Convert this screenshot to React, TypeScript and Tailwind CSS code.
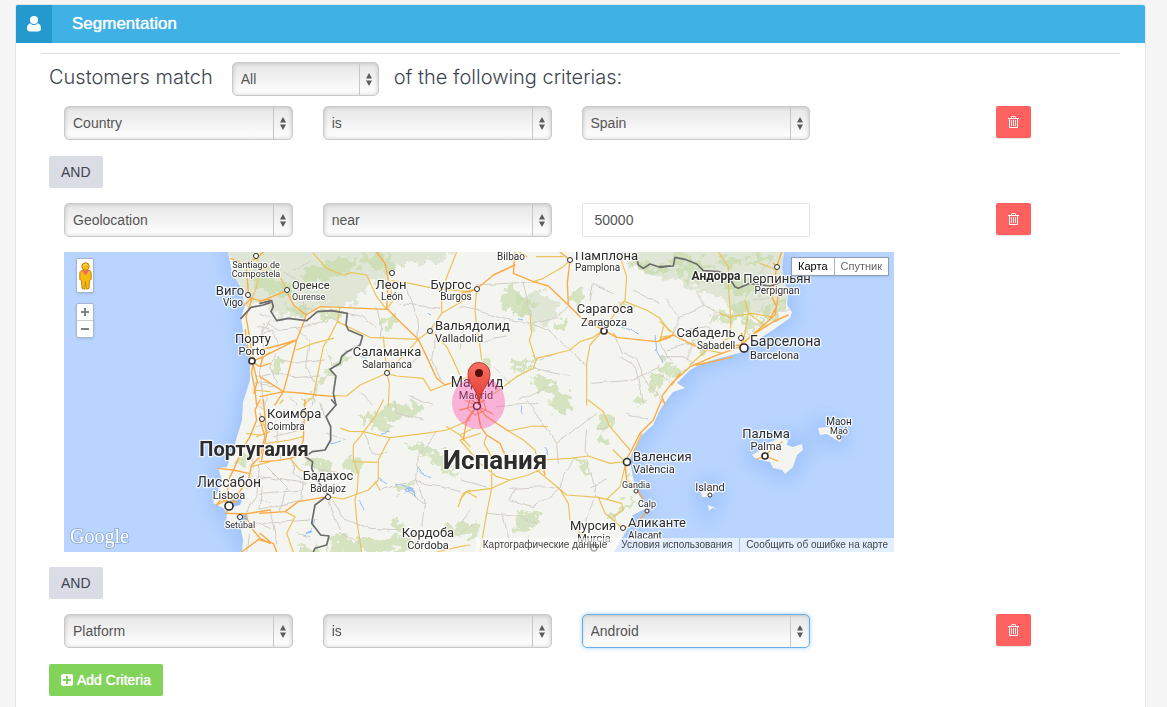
import React, { useState } from "react";

/* ---------- Icons ---------- */

function UserIcon() {
  return (
    <svg width="14" height="16" viewBox="0 0 14 16" fill="currentColor" aria-hidden="true">
      <circle cx="7" cy="4" r="4" />
      <path d="M3.2 7.2C1.2 7.8 0 9.6 0 12.6 0 14.3 1 15.4 2.6 15.4h8.8c1.600 0 2.600-1.100 2.600-2.800 0-3-1.200-4.800-3.200-5.400C9.800 8.300 8.500 9 7 9S4.200 8.300 3.200 7.200z" />
    </svg>
  );
}

function TrashIcon() {
  return (
    <svg width="11" height="12" viewBox="0 0 11 12" fill="none" stroke="currentColor" aria-hidden="true">
      <path d="M0 2.500H11M3.500 2.500V1.200Q3.500 .5 4.200 .5H6.800Q7.500 .5 7.500 1.200V2.500M1.500 2.500V11.500H9.500V2.500" />
      <path d="M3.500 4V10M5.500 4V10M7.500 4V10" opacity=".85" />
    </svg>
  );
}

function PlusSquareIcon() {
  return (
    <svg width="12" height="12" viewBox="0 0 12 12" aria-hidden="true">
      <rect width="12" height="12" rx="2.200" fill="white" />
      <path d="M6 2V10M2 6H10" stroke="#82d35a" strokeWidth="2" />
    </svg>
  );
}

function PegmanIcon() {
  return (
    <svg width="13" height="28" viewBox="0 0 13 28" aria-hidden="true">
      <path
        d="M2.500 8.500H10.500Q12.200 9 12.200 11V17.500L10.500 18.500 10 26.500 7.200 27.200 6.500 19.500 5.800 27.200 3 26.500 2.500 18.500 .8 17.500V11Q.8 9 2.500 8.500Z"
        fill="#f6b90d"
        stroke="#c98611"
      />
      <path d="M2.800 8.500H10.200L6.500 13.500Z" fill="#ef6a6a" />
      <circle cx="6.500" cy="4.500" r="3.700" fill="#f6b90d" stroke="#c98611" />
      <path d="M4.500 3.500Q6 2 8 3" stroke="#ffe58a" fill="none" />
    </svg>
  );
}

/* ---------- Form controls ---------- */

type PickerProps = { label: string; value: string; options: string[]; focused?: boolean };

function Picker({ label, value, options, focused }: PickerProps) {
  const [current, setCurrent] = useState(value);
  return (
    <div className="relative w-full">
      <select
        aria-label={label}
        value={current}
        onChange={(e) => setCurrent(e.target.value)}
        className={
          focused
            ? "block h-[34px] w-full appearance-none rounded-[5px] border border-[#66afe9] bg-linear-to-b from-[#e6e6e6] to-white pr-8 pl-2 text-sm text-[#555] shadow-[inset_0_1px_3px_rgba(0,0,0,0.15),0_0_4px_rgba(102,175,233,0.6)] outline-none"
            : "block h-[34px] w-full appearance-none rounded-[5px] border border-[#cacaca] bg-linear-to-b from-[#e6e6e6] to-white pr-8 pl-2 text-sm text-[#555] shadow-[inset_0_0_4px_rgba(0,0,0,0.2)] outline-none"
        }
      >
        {options.map((o) => (
          <option key={o}>{o}</option>
        ))}
      </select>
      <span className="pointer-events-none absolute inset-y-px right-px flex w-[19px] items-center justify-center border-l border-[#c8c8c8] text-[#5c5c5c]">
        <svg width="6" height="13" viewBox="0 0 6 13" fill="currentColor" aria-hidden="true">
          <path d="M3 0L6 5.500H0ZM3 13L0 7.500H6Z" />
        </svg>
      </span>
    </div>
  );
}

function DeleteButton() {
  return (
    <button
      type="button"
      aria-label="Delete"
      className="flex h-8 w-[35px] items-center justify-center rounded-xs bg-[#ff6060] text-white shadow-[0_1px_1px_rgba(0,0,0,0.1)]"
    >
      <TrashIcon />
    </button>
  );
}

function CriteriaRow({ children }: { children: React.ReactNode }) {
  const cells = React.Children.toArray(children);
  return (
    <div className="grid grid-cols-4">
      {cells.map((cell, i) => (
        <div key={i} className="px-[15px]">
          {cell}
        </div>
      ))}
      <div className="flex justify-end pr-[53px]">
        <DeleteButton />
      </div>
    </div>
  );
}

function AndTag() {
  return (
    <div className="flex">
      <span className="flex h-8 items-center rounded-xs bg-[#dadde5] px-3 text-sm text-[#3c4650]">AND</span>
    </div>
  );
}

/* ---------- Map ---------- */

type Tile = { x: number; y: number; orange: string; yellow: string; minor: string; border: string };

const tiles: Tile[] = [
  {
    x: 60,
    y: 250,
    orange:
      "M560 60L565 130 575 150 558 200 565 240 580 330 575 370 585 420 590 465M575 335L610 320 630 308M575 335L600 350 630 340M512 25L550 42 590 25 610 6M550 70L575 75M552 165L575 145 600 152 630 148M575 335L563 290 556 240M580 345L592 395 582 430",
    yellow: "M590 20L600 60 590 110 575 150M600 60L630 50M580 420L630 425",
    minor:
      "M590 230L630 240M600 190L630 200M590 380L630 370M600 350L610 465M590 270L630 260M610 220L605 330M585 400L630 400",
    border: "M543 205L573 172 610 165 630 158",
  },
  {
    x: 60,
    y: 400,
    orange:
      "M600 0L585 30 590 60 570 110 545 150 525 200 508 235 500 290 507 318M600 60L615 110 600 170 575 195 565 240 535 280 507 318M475 205L520 210 565 220M470 315L500 300 520 290M507 318L500 340 555 342 630 330M555 342L575 385 600 415 630 430M600 415L545 456M470 315L485 295 505 310 530 305",
    yellow: "M600 105L560 100M575 200L630 185M590 110L630 95",
    minor:
      "M560 130L580 200 560 270M590 240L630 230M600 180L590 290 560 340M610 260L600 330M560 380L600 370 630 385M600 300L630 310M600 20L630 30M590 80L630 70M565 400L560 456",
    border: "",
  },
  {
    x: 260,
    y: 250,
    orange:
      "M0 155L60 130 80 122 100 165 138 195 180 170 240 172 380 178M138 195L130 220 110 270 85 370 70 425 45 465M0 325L50 300 110 270M0 300L60 285 110 270M0 380L70 425 130 430 170 435 225 440M350 6L375 40 385 90 380 175 420 215 475 268 500 320 530 385 555 405 630 380M0 440L70 425M10 320L0 350",
    yellow:
      "M80 120L60 80 0 60M160 10L200 55 250 75 275 68 320 75 350 140 380 178M240 172L232 215 215 250 190 290 180 340 160 440 130 465M232 215L330 262 475 268 510 242 545 190 630 140M510 242L560 290 575 320 600 375M370 260L375 310 380 370 410 378 490 385 512 422 555 405M380 370L300 405 260 438 225 437M380 370L475 268M545 190L545 120 590 6M380 370L388 400 385 465M110 300L160 280 220 265M395 92L450 100 520 115 630 125M385 90L400 150 380 178",
    minor:
      "M20 220L60 240 110 235 200 215M0 260L40 240 60 290 30 350 50 400M60 330L120 340 190 330M40 370L100 380 180 375M110 235L150 280 140 350 170 400 160 465M30 210L10 250M190 200L240 215M200 300L220 350M350 170L365 230 360 265M440 110L470 200 475 268M420 160L540 175M530 240L515 330 540 390M475 320L430 350M300 430L340 465M90 440L110 465M0 405L40 410M20 440L15 465M260 190L310 200 350 230M450 440L520 465M60 60L110 90 140 190M100 60L150 30",
    border:
      "M0 160L35 152 40 170 33 185 50 212 85 205 140 212 172 185 215 182 262 190 258 225 265 240 308 258 300 285 262 305 245 320 240 340 210 358 228 378 220 430 228 465",
  },
  {
    x: 260,
    y: 400,
    orange:
      "M0 340L75 335 115 305 203 290M0 185L50 182 90 175 120 165M135 0L130 120 115 165M10 0L20 100 5 180M0 420L40 430 50 456M0 400L30 425",
    yellow:
      "M370 0L345 50 300 110 280 135 280 180 295 220 292 270 285 300 290 360 305 456M243 85L268 94 310 95 365 108 390 113 495 100 560 90 630 60M390 113L375 140 355 180 355 240 325 270 250 297 203 290M345 245L360 270M280 185L350 187M90 175L120 210 150 220M75 335L105 350 80 400 100 456M20 130L90 120 130 110M530 456L600 440 630 435M560 80L600 105 630 140M595 320L610 280 630 270M0 40L20 100M70 0L60 10",
    minor:
      "M100 185L100 220 130 240 125 300 0 330M20 200L80 260 60 330M0 230L140 250M215 300L245 350 330 385 430 390M203 290L240 400 300 430M360 270L470 240 500 255 540 260 600 275M470 240L495 300 485 380M470 240L475 170 530 100M450 280L495 310M45 70L60 180M10 370L150 360M30 330L50 430M150 410L110 400M40 110L120 90M0 280L130 270M180 10L190 50M200 100L260 120M160 200L260 230M310 100L340 160 380 160M400 0L410 40 490 60M600 370L630 330",
    border:
      "M215 0L228 15 198 50 212 80 212 120 195 150 157 155 135 170 158 185 155 205 170 240 205 285 165 315 155 370 182 405 207 408 200 435 165 445 160 456",
  },
  {
    x: 460,
    y: 250,
    orange:
      "M165 6L160 70 220 95 265 108 325 165 365 205 430 240 470 262 590 275 630 262M50 117L100 75 165 45M330 30L322 100 325 165M50 117L0 130M180 6L200 20M300 6L330 30",
    yellow:
      "M50 117L45 180 50 230 60 290 65 330M430 240L400 262 360 275 330 300 230 325 220 355 170 380 130 410 90 440M210 195L215 250 208 270 225 325M480 20L500 80 495 150 465 190 430 240M495 155L560 180 600 205 630 245M430 240L390 285 380 340 380 465M220 95L250 85 310 50 330 30M230 20L310 20M0 140L50 117M610 230L600 275M470 262L460 250",
    minor:
      "M50 105L230 95M0 170L50 180 120 205 215 220 290 200 325 165M215 220L270 245 340 310 380 345M60 285L100 262 140 255M395 400L520 390 600 350M470 262L490 310 530 325 560 400 620 465M225 355L330 380M520 120L600 160M480 320L530 350 550 460M190 100L215 200M240 330L290 310M390 150L400 100 460 130M100 350L150 400M180 450L260 410M10 240L0 300M600 280L630 330",
    border: "M500 20L530 22 535 45 550 55 570 42 600 52 630 48",
  },
  {
    x: 460,
    y: 400,
    orange:
      "M50 17L80 50 145 93M50 17L20 60 10 120M50 17L0 30M50 17L62 80 80 105 120 130 135 165M50 17L90 -20M50 17L20 -20M495 185L515 150 540 100 580 60 605 0M495 190L500 240 530 265 550 300M488 385L530 370 560 335M250 205L255 225",
    yellow:
      "M145 93L220 78 262 80M145 93L190 120 225 150 235 190 230 210 300 268 320 285 415 292 440 298 480 260 495 200M135 165L150 185 240 180 330 175 385 168 450 190 495 185M0 120L60 100M80 105L72 130 95 170 95 265 80 340 60 456M0 120L60 190 110 230 150 240 205 225 250 205M150 240L95 265 20 275 0 300M300 268L325 310 330 360 370 410M415 292L435 340 488 385M385 0L430 35 450 80 510 150M460 150L490 180M440 298L485 310 490 330 460 350M20 275L50 292M0 105L40 85M545 100L520 160",
    minor:
      "M200 0L240 60 290 130 295 190M290 130L380 60 410 40M345 175L310 230 300 268M150 265L260 260 300 268M300 268L220 320 150 300 170 260M380 90L375 150 385 168M80 340L180 350 230 370M400 300L370 400M440 240L390 260M380 180L415 292M0 240L95 265M0 395L40 370M410 90L450 80M560 60L500 40M110 20L230 10M130 350L150 430",
    border: "",
  },
  {
    x: 660,
    y: 250,
    orange:
      "M5 440L35 400 90 350 160 320 240 290 270 260 340 215 385 195M240 285L200 290 130 300 90 280 40 255 0 270M365 6L350 50 335 140 350 170 330 205M15 462L5 440M110 345L215 322M350 50L340 40M355 135L345 195 300 235 265 265M35 405L60 370M245 290L245 250",
    yellow:
      "M250 275L265 190 255 150M205 100L212 205 212 250M175 6L205 50 205 100M0 215L40 250M0 262L40 255M212 200L275 190 330 200M265 190L320 230M90 345L140 300 190 310M350 60L300 40M212 260L180 280M215 205L180 190",
    minor:
      "M40 255L60 200 130 170 210 200M60 200L20 150M0 320L70 320 110 345M130 170L110 120M70 240L140 230 200 260M100 280L80 330M280 150L330 140M20 300L90 280M290 200L310 160M340 20L290 80 300 140M150 220L170 180M0 370L35 400M360 180L385 180",
    border: "M0 50L40 48 45 22 75 28 110 42 130 62 175 65 190 70 205 80 225 110 235 115 270 100 330 108 372 95",
  },
];

const coast =
  "M228 252L230 262 232 273 240 286 245 305 241 318 244 337 250 360 250 380 243 402 242 420 233 450 227 467 218 468 222 480 217 493 213 503 223 508 227 513 226 523 240 525 243 540 242 552H614L622 538 627 530 633 515 647 508 640 497 635 487 632 472 630 460 632 453 642 435 653 425 660 410 667 400 673 392 685 388 677 383 690 370 703 363 720 358 743 352 757 340 773 330 790 318 792 312 787 305 788 293 783 277 782 267 784 252Z";

const islands = [
  "M752 455L760 450 770 442 780 438 788 440 787 445 793 447 802 444 803 450 797 455 793 467 785 474 782 470 773 468 770 462 760 460 755 458Z",
  "M818 428L827 427 837 428 842 437 840 442 833 438 827 434 820 435Z",
  "M701 492L713 485 716 488 712 497 702 497Z",
  "M708 505L713 507 717 509 712 508 709 511Z",
];

const relief =
  "M228 245H455L440 262 400 262 392 275 365 290 350 306 318 307 307 317 275 317 270 305 245 303ZM515 295L545 290 560 312 535 330 520 312ZM615 245H790L786 305 770 318 752 312 742 322 725 300 700 292 680 280 655 278 625 262Z";

const forests: [number, number, number, number, number][] = [
  [275, 285, 22, 9, 10], [330, 270, 30, 9, -15], [380, 262, 18, 7, 10], [300, 310, 14, 4, 0],
  [390, 322, 8, 5, -30], [330, 315, 14, 4, 5], [340, 360, 11, 5, -25], [330, 376, 8, 4, -40],
  [375, 422, 20, 5, 25], [400, 412, 25, 7, -10], [355, 464, 9, 9, 20], [318, 465, 18, 6, 30],
  [430, 452, 22, 5, 20], [445, 466, 16, 4, 30], [396, 527, 5, 6, 0], [380, 545, 40, 8, -5],
  [345, 545, 18, 8, 0], [460, 530, 18, 8, 0], [405, 488, 9, 3, -20], [243, 459, 7, 5, -40],
  [518, 303, 17, 11, 30], [577, 298, 6, 9, 0], [563, 325, 5, 5, 0], [545, 385, 14, 7, 30],
  [560, 402, 12, 10, 60], [525, 365, 12, 4, -20], [484, 365, 8, 4, 0], [583, 465, 12, 4, 40],
  [527, 522, 12, 9, -30], [465, 528, 14, 8, 0], [605, 420, 8, 9, 20], [603, 440, 6, 5, 0],
  [612, 517, 5, 4, 0], [632, 475, 3, 6, 0], [625, 505, 12, 3, -50], [655, 383, 7, 11, 30],
  [665, 365, 5, 7, 20], [672, 372, 8, 5, -40], [640, 400, 6, 4, 0], [700, 345, 9, 4, 20],
  [738, 312, 14, 8, -30], [752, 325, 10, 6, 0], [768, 312, 8, 8, 0], [720, 318, 7, 5, 20],
  [695, 275, 18, 6, 20], [740, 285, 22, 7, 10], [650, 268, 20, 4, 10], [690, 262, 22, 5, 15],
  [760, 260, 12, 4, 0], [310, 398, 5, 3, 0], [312, 550, 12, 5, 0], [262, 272, 10, 4, 0],
  [730, 262, 15, 5, 0], [782, 305, 5, 7, 0], [630, 305, 7, 3, 0], [277, 366, 4, 8, 30],
];

type Label = { x: number; y: number; t: string; s: number; b?: boolean; a?: "start" | "middle" | "end" };

const labels: Label[] = [
  { x: 256, y: 268, t: "Santiago de", s: 9 },
  { x: 256, y: 277, t: "Compostela", s: 9 },
  { x: 230, y: 295, t: "Виго", s: 13 },
  { x: 233, y: 306, t: "Vigo", s: 10 },
  { x: 292, y: 289, t: "Оренсе", s: 11, a: "start" },
  { x: 292, y: 300, t: "Ourense", s: 9, a: "start" },
  { x: 391, y: 289, t: "Леон", s: 13 },
  { x: 392, y: 300, t: "León", s: 10 },
  { x: 451, y: 289, t: "Бургос", s: 13 },
  { x: 456, y: 300, t: "Burgos", s: 10 },
  { x: 511, y: 260, t: "Bilbao", s: 10 },
  { x: 575, y: 260, t: "Памплона", s: 13, a: "start" },
  { x: 575, y: 271, t: "Pamplona", s: 10, a: "start" },
  { x: 716, y: 280, t: "Андорра", s: 12, b: true },
  { x: 777, y: 283, t: "Перпиньян", s: 13 },
  { x: 777, y: 294, t: "Perpignan", s: 10 },
  { x: 253, y: 343, t: "Порту", s: 13 },
  { x: 252, y: 355, t: "Porto", s: 11 },
  { x: 605, y: 313, t: "Сарагоса", s: 13 },
  { x: 604, y: 326, t: "Zaragoza", s: 11 },
  { x: 435, y: 330, t: "Вальядолид", s: 13, a: "start" },
  { x: 435, y: 342, t: "Valladolid", s: 11, a: "start" },
  { x: 387, y: 356, t: "Саламанка", s: 13 },
  { x: 387, y: 368, t: "Salamanca", s: 10 },
  { x: 706, y: 337, t: "Сабадель", s: 13 },
  { x: 716, y: 349, t: "Sabadell", s: 10 },
  { x: 750, y: 346, t: "Барселона", s: 14, a: "start" },
  { x: 750, y: 359, t: "Barcelona", s: 11, a: "start" },
  { x: 477, y: 387, t: "Мадрид", s: 14 },
  { x: 476, y: 399, t: "Madrid", s: 11 },
  { x: 267, y: 418, t: "Коимбра", s: 13, a: "start" },
  { x: 267, y: 430, t: "Coimbra", s: 10, a: "start" },
  { x: 254, y: 456, t: "Португалия", s: 20, b: true },
  { x: 495, y: 469, t: "Испания", s: 26, b: true },
  { x: 229, y: 487, t: "Лиссабон", s: 14 },
  { x: 229, y: 499, t: "Lisboa", s: 11 },
  { x: 240, y: 528, t: "Setúbal", s: 9 },
  { x: 328, y: 480, t: "Бадахос", s: 13 },
  { x: 328, y: 492, t: "Badajoz", s: 10 },
  { x: 428, y: 537, t: "Кордоба", s: 13 },
  { x: 428, y: 549, t: "Córdoba", s: 11 },
  { x: 593, y: 530, t: "Мурсия", s: 13 },
  { x: 594, y: 542, t: "Murcia", s: 11 },
  { x: 628, y: 527, t: "Аликанте", s: 13, a: "start" },
  { x: 628, y: 539, t: "Alacant", s: 10, a: "start" },
  { x: 633, y: 461, t: "Валенсия", s: 13, a: "start" },
  { x: 633, y: 473, t: "València", s: 11, a: "start" },
  { x: 636, y: 488, t: "Gandia", s: 9 },
  { x: 647, y: 507, t: "Calp", s: 9 },
  { x: 766, y: 438, t: "Пальма", s: 13 },
  { x: 766, y: 450, t: "Palma", s: 11 },
  { x: 839, y: 425, t: "Маон", s: 10 },
  { x: 839, y: 434, t: "Maó", s: 9 },
  { x: 710, y: 491, t: "Island", s: 11 },
];

const towns: [number, number, number][] = [
  [256, 256, 2.5], [248, 295, 2.5], [287, 290, 2.5], [392, 273, 2.5], [477, 289, 2.5],
  [570, 260, 2.5], [777, 267, 2.5], [252, 361, 3], [604, 331, 3], [430, 331, 2.5],
  [387, 373, 2.5], [741, 338, 2.5], [744, 348, 4], [477, 406, 3.5], [262, 419, 2.5],
  [229, 506, 4], [240, 517, 2.5], [328, 497, 2.5], [623, 528, 2.5], [594, 548, 3],
  [627, 462, 3.5], [636, 491, 2], [647, 511, 2], [765, 456, 3], [839, 437, 2], [710, 495, 2],
];

function MapDrawing() {
  return (
    <svg
      viewBox="64 252 830 300"
      preserveAspectRatio="xMidYMid slice"
      className="block h-[300px] w-full bg-[#b9d5ff]"
      role="img"
      aria-label="Map"
    >
      <defs>
        <clipPath id="land">
          <path d={coast} />
        </clipPath>
        <filter id="shelf" x="-20%" y="-20%" width="140%" height="140%">
          <feGaussianBlur stdDeviation="10" />
        </filter>
        <filter id="rough" x="-5%" y="-5%" width="110%" height="110%">
          <feTurbulence type="fractalNoise" baseFrequency="0.12" numOctaves="3" seed="4" />
          <feDisplacementMap in="SourceGraphic" scale="22" xChannelSelector="R" yChannelSelector="G" />
        </filter>
        <filter id="wobble">
          <feTurbulence type="fractalNoise" baseFrequency="0.07" numOctaves="2" seed="9" />
          <feDisplacementMap in="SourceGraphic" scale="5" xChannelSelector="R" yChannelSelector="G" />
        </filter>
        <linearGradient id="pin" x1="0" y1="0" x2="0" y2="1">
          <stop offset="0" stopColor="#fb7064" />
          <stop offset="1" stopColor="#d9372b" />
        </linearGradient>
      </defs>

      <g filter="url(#shelf)" opacity=".6">
        <path d={coast} fill="#8ab5f6" stroke="#8ab5f6" strokeWidth="10" />
        {islands.map((d) => (
          <path key={d} d={d} fill="#8ab5f6" stroke="#8ab5f6" strokeWidth="14" />
        ))}
      </g>
      <path d={coast} fill="#f4f4f0" />
      {islands.map((d) => (
        <path key={d} d={d} fill="#f4f4f0" />
      ))}

      <g clipPath="url(#land)">
        <path d={relief} fill="#dfe6d5" filter="url(#rough)" />
        <g fill="#c8dcab" opacity=".7" filter="url(#rough)">
          {forests.map(([x, y, rx, ry, r]) => (
            <ellipse key={`${x}-${y}`} cx={x} cy={y} rx={rx} ry={ry} transform={`rotate(${r} ${x} ${y})`} />
          ))}
        </g>
        <path d="M230 500L243 497 240 505 232 507ZM236 516L247 514 248 520 239 521Z" fill="#97bdf5" />
        <g stroke="#93bdf7" fill="none" strokeWidth="1" filter="url(#wobble)">
          <path d="M396 484L405 486 409 493 416 497M404 492L412 491M416 465L422 474 430 478M378 478L386 483M357 354L368 361M305 535L312 527 315 520M544 446L548 455M522 406L521 413M655 335L657 352 664 364M330 444L340 441M428 313L431 316M517 318L522 319M360 500L364 510M380 435L390 432M300 420L305 424M598 318L606 320 640 334" />
          <path d="M404 490Q412 486 416 497M306 533L312 531" strokeWidth="2" />
        </g>
      </g>

      <g fill="none" strokeLinejoin="round" strokeLinecap="round">
        <g filter="url(#wobble)" clipPath="url(#land)">
          {tiles.map((t) => (
            <path
              key={`m${t.x}-${t.y}`}
              transform={`translate(${t.x} ${t.y}) scale(.3333)`}
              d={t.minor}
              stroke="#d2cdc6"
              strokeWidth="3"
            />
          ))}
        </g>
        {tiles.map((t) => (
          <g key={`r${t.x}-${t.y}`} transform={`translate(${t.x} ${t.y}) scale(.3333)`}>
            <path d={t.yellow} stroke="#ecc35b" strokeWidth="3.600" />
            <path d={t.orange} stroke="#fbab45" strokeWidth="4.200" />
            <path d={t.border} stroke="#6b6b6b" strokeWidth="5" />
          </g>
        ))}
        <path d="M765 456L772 449 782 442M765 456L757 459M765 456L778 461" stroke="#fbab45" strokeWidth="1.200" />
        <path
          d="M477 406L463 399M477 406L468 420M477 406L490 396M477 406L493 414M477 406L480 424M477 406L466 390M470 400L483 399 486 410 475 415 468 409Z"
          stroke="#fb8b45"
        />
      </g>

      <g fill="#fff" stroke="#2b2b2b">
        {towns.map(([x, y, r]) => (
          <circle key={`${x}-${y}`} cx={x} cy={y} r={r} strokeWidth={r >= 3 ? 1.6 : 1} />
        ))}
      </g>
      <g
        fontFamily="Roboto, 'Noto Sans', sans-serif"
        fill="#2d2d2d"
        stroke="#fff"
        strokeOpacity=".8"
        strokeWidth="2.500"
        strokeLinejoin="round"
        paintOrder="stroke"
      >
        {labels.map((l) => (
          <text
            key={l.t}
            x={l.x}
            y={l.y}
            fontSize={l.s}
            fontWeight={l.b ? 700 : 400}
            textAnchor={l.a ?? "middle"}
          >
            {l.t}
          </text>
        ))}
      </g>

      <circle cx="478.500" cy="402.500" r="26.500" fill="#ff3ea5" fillOpacity=".36" />
      <path
        d="M479 405C478 394 474 389 471 384 469 381 468 377 468 373.500A11 11 0 0 1 490 373.500C490 377 489 381 487 384 484 389 480 394 479 405Z"
        fill="url(#pin)"
        stroke="#a8281f"
        strokeWidth=".8"
      />
      <circle cx="479" cy="373" r="4" fill="#54100c" />
      <text
        x="70"
        y="543"
        fontFamily="'Liberation Serif', serif"
        fontSize="20"
        fill="#fff"
        stroke="#7f9cc8"
        strokeOpacity=".6"
        strokeWidth="2"
        paintOrder="stroke"
      >
        Google
      </text>
    </svg>
  );
}

function GeoMap() {
  return (
    <div className="relative w-full max-w-[830px] overflow-hidden">
      <MapDrawing />
      <button
        type="button"
        aria-label="Street View"
        className="absolute top-[6px] left-3 flex h-[35px] w-[18px] items-center justify-center rounded-xs border border-[#a5b6cf] bg-white shadow-sm"
      >
        <PegmanIcon />
      </button>
      <div className="absolute top-[51px] left-3 flex h-[35px] w-[18px] flex-col rounded-xs border border-[#a5b6cf] bg-white text-[#808080] shadow-sm">
        <button type="button" aria-label="Zoom in" className="flex flex-1 items-center justify-center border-b border-[#ccc]">
          <svg width="8" height="8" viewBox="0 0 8 8" stroke="currentColor" strokeWidth="2" aria-hidden="true">
            <path d="M4 0V8M0 4H8" />
          </svg>
        </button>
        <button type="button" aria-label="Zoom out" className="flex flex-1 items-center justify-center">
          <svg width="8" height="2" viewBox="0 0 8 2" stroke="currentColor" strokeWidth="2" aria-hidden="true">
            <path d="M0 1H8" />
          </svg>
        </button>
      </div>
      <div className="absolute top-[5px] right-[5px] flex h-[19px] border border-[#8f9fba] bg-white text-[11px] shadow-sm">
        <button type="button" className="border-r border-[#a9b4c6] px-[6px] text-black">
          Карта
        </button>
        <button type="button" className="px-[6px] text-[#666]">
          Спутник
        </button>
      </div>
      <div className="absolute right-0 bottom-0 flex h-[14px] items-center text-[10px] leading-[14px] text-[#444]">
        <a href="#data" className="bg-white/60 px-[7px]">
          Картографические данные
        </a>
        <a href="#terms" className="bg-white/60 px-[7px]">
          Условия использования
        </a>
        <a href="#report" className="border-l border-[#a9c4ef] bg-white/60 px-[6px]">
          Сообщить об ошибке на карте
        </a>
      </div>
    </div>
  );
}

/* ---------- Page ---------- */

export default function App() {
  const [radius, setRadius] = useState("50000");
  return (
    <main className="min-h-screen bg-[#f5f5f5] pt-[5px] pr-[22px] pl-4 font-['Liberation_Sans',Arial,sans-serif]">
      <section className="min-h-[702px] rounded-t-xs bg-white shadow-[0_0_0_1px_#e6e6e6]">
        <header className="flex h-[38px] items-center overflow-hidden rounded-t-xs bg-[#3fb1e5] text-white">
          <span className="flex h-full w-9 items-center justify-center bg-[#2399cd]">
            <UserIcon />
          </span>
          <h1 className="pl-5 text-[17px] [text-shadow:0_0_1px_#fff]">Segmentation</h1>
        </header>

        <div className="px-[25px] pt-[10px]">
          <hr className="border-[#dedede]" />
        </div>

        <form className="pt-2 pr-[61px] pb-3 pl-[33px]" onSubmit={(e) => e.preventDefault()}>
          <div className="flex items-center text-[#3c4650]">
            <span className="pb-1 font-[Inter] text-[20px] leading-[30px] font-light">Customers match</span>
            <div className="mr-[15px] ml-[19px] w-[147px]">
              <Picker label="Match mode" value="All" options={["All", "Any"]} />
            </div>
            <span className="pb-1 font-[Inter] text-[20px] leading-[30px] font-light">of the following criterias:</span>
          </div>

          <div className="pt-[10px]">
            <CriteriaRow>
              <Picker label="Field" value="Country" options={["Country", "Geolocation", "Platform"]} />
              <Picker label="Operator" value="is" options={["is", "is not"]} />
              <Picker label="Country" value="Spain" options={["Spain", "Portugal", "France"]} />
            </CriteriaRow>
          </div>

          <div className="pt-4 pb-[15px]">
            <AndTag />
          </div>

          <CriteriaRow>
            <Picker label="Field" value="Geolocation" options={["Country", "Geolocation", "Platform"]} />
            <Picker label="Operator" value="near" options={["near", "far from"]} />
            <input
              aria-label="Radius"
              value={radius}
              onChange={(e) => setRadius(e.target.value)}
              className="block h-[34px] w-full rounded-xs border border-[#e4e4e8] bg-white px-3 text-sm text-[#555] outline-none"
            />
          </CriteriaRow>

          <div className="py-[15px] pl-[15px]">
            <GeoMap />
          </div>

          <AndTag />

          <div className="pt-[15px] pb-4">
            <CriteriaRow>
              <Picker label="Field" value="Platform" options={["Country", "Geolocation", "Platform"]} />
              <Picker label="Operator" value="is" options={["is", "is not"]} />
              <Picker label="Platform" value="Android" options={["Android", "iOS"]} focused />
            </CriteriaRow>
          </div>

          <button
            type="button"
            className="flex h-8 items-center gap-1 rounded-xs bg-[#82d35a] px-3 text-sm text-white [text-shadow:0_0_1px_#fff]"
          >
            <PlusSquareIcon />
            Add Criteria
          </button>
        </form>
      </section>
    </main>
  );
}
